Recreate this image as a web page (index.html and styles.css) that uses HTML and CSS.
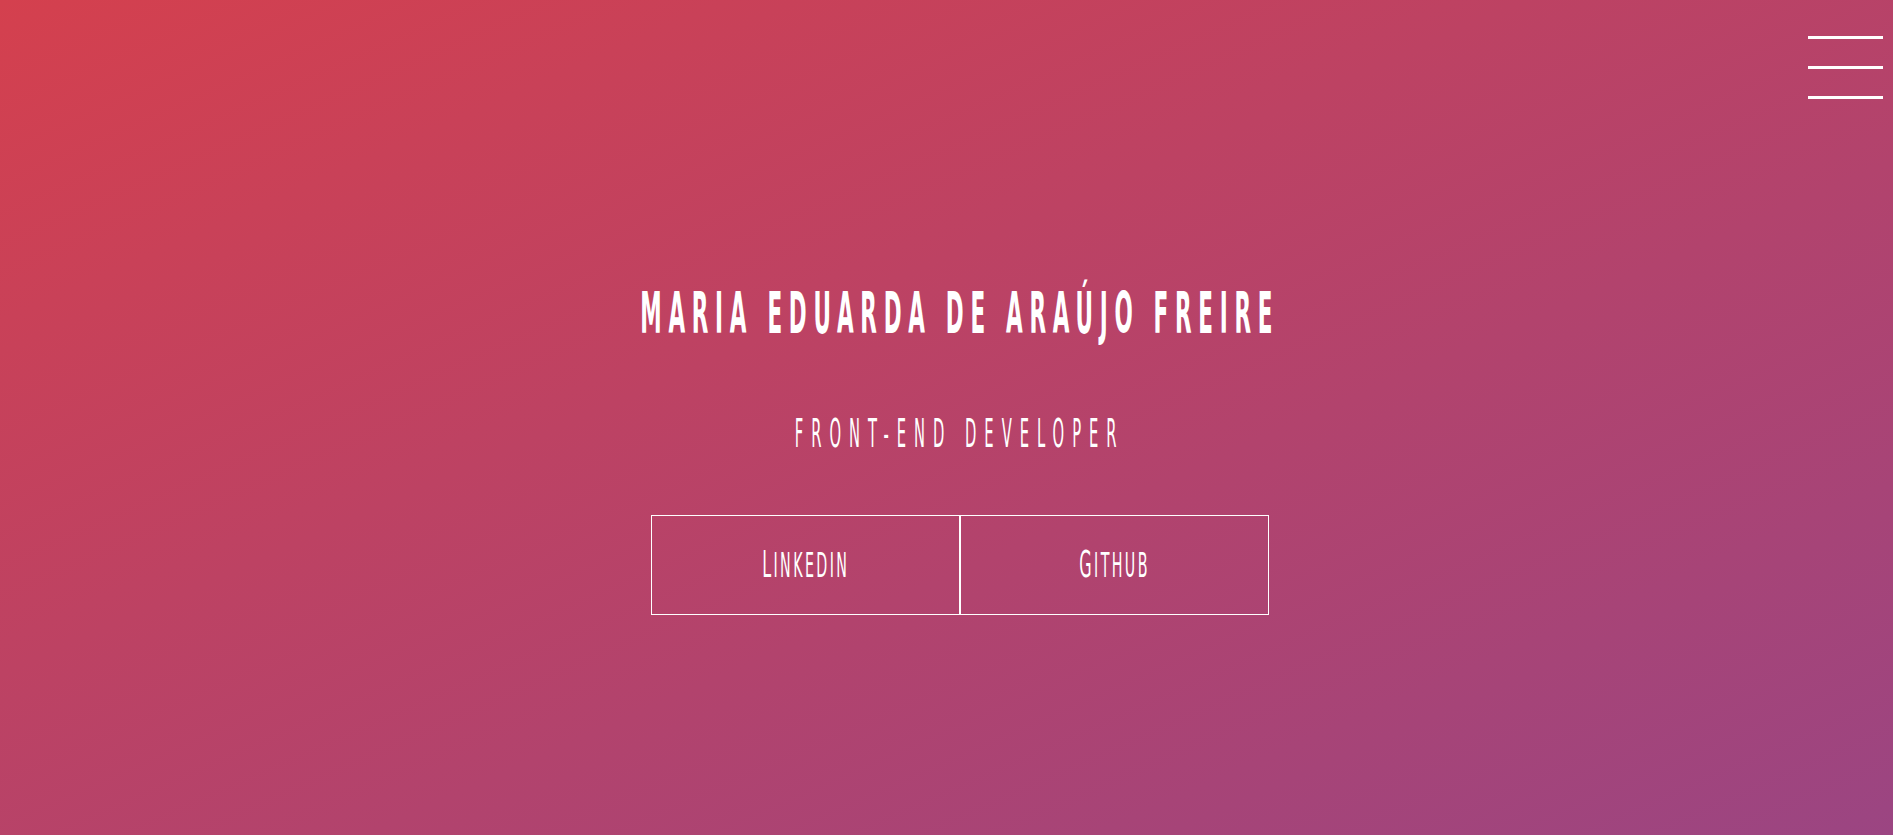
FILE: index.html
```html
<!DOCTYPE html>
<html lang="pt">
<head>
<meta charset="utf-8">
<title>Maria Eduarda de Araújo Freire</title>
<link rel="stylesheet" href="styles.css">
</head>
<body>
<main class="hero">
  <button class="menu-toggle" aria-label="Menu">
    <span class="bar"></span>
    <span class="bar"></span>
    <span class="bar"></span>
  </button>
  <h1 class="title"><span class="squeeze">MARIA EDUARDA DE ARAÚJO FREIRE</span></h1>
  <h2 class="subtitle"><span class="squeeze">FRONT-END DEVELOPER</span></h2>
  <nav class="links">
    <a class="link-btn" href="#"><span class="squeeze label">Linkedin</span></a>
    <a class="link-btn" href="#"><span class="squeeze label">Github</span></a>
  </nav>
</main>
</body>
</html>
```
FILE: styles.css
```css
html, body {
  margin: 0;
  padding: 0;
  height: 100%;
}
body {
  font-family: "DejaVu Sans Condensed", "Liberation Sans", sans-serif;
  color: #fff;
  background: linear-gradient(to bottom right, #d4404e, #9b4582);
  overflow: hidden;
}
.hero {
  position: relative;
  height: 835px;
  display: flex;
  flex-direction: column;
  align-items: center;
  box-sizing: border-box;
  padding-top: 283px;
  padding-left: 27px;
}
.menu-toggle {
  position: absolute;
  top: 36px;
  right: 10px;
  width: 75px;
  padding: 0;
  border: 0;
  background: none;
  display: flex;
  flex-direction: column;
  gap: 27px;
  cursor: pointer;
}
.bar {
  display: block;
  width: 75px;
  height: 3px;
  background: #fff;
}
.squeeze {
  display: inline-block;
  transform: scaleX(0.42);
  white-space: nowrap;
}
.title {
  margin: 0;
  font-size: 57px;
  font-weight: 700;
  line-height: 60px;
  letter-spacing: 16px;
}
.subtitle {
  margin: 71px 0 0;
  font-size: 39px;
  font-weight: 400;
  line-height: 40px;
  letter-spacing: 19px;
}
.links {
  margin-top: 61px;
  display: flex;
}
.link-btn {
  width: 307px;
  height: 98px;
  border: 1px solid #fff;
  display: flex;
  align-items: center;
  justify-content: center;
  color: #fff;
  text-decoration: none;
}
.link-btn + .link-btn {
  border-left: 0;
}
.link-btn:first-child {
  border-right: 2px solid #fff;
}
.label {
  font-size: 33px;
  line-height: 40px;
  text-transform: uppercase;
  letter-spacing: 5px;
  transform: scaleX(0.48);
}
.label::first-letter {
  font-size: 37px;
}
```
